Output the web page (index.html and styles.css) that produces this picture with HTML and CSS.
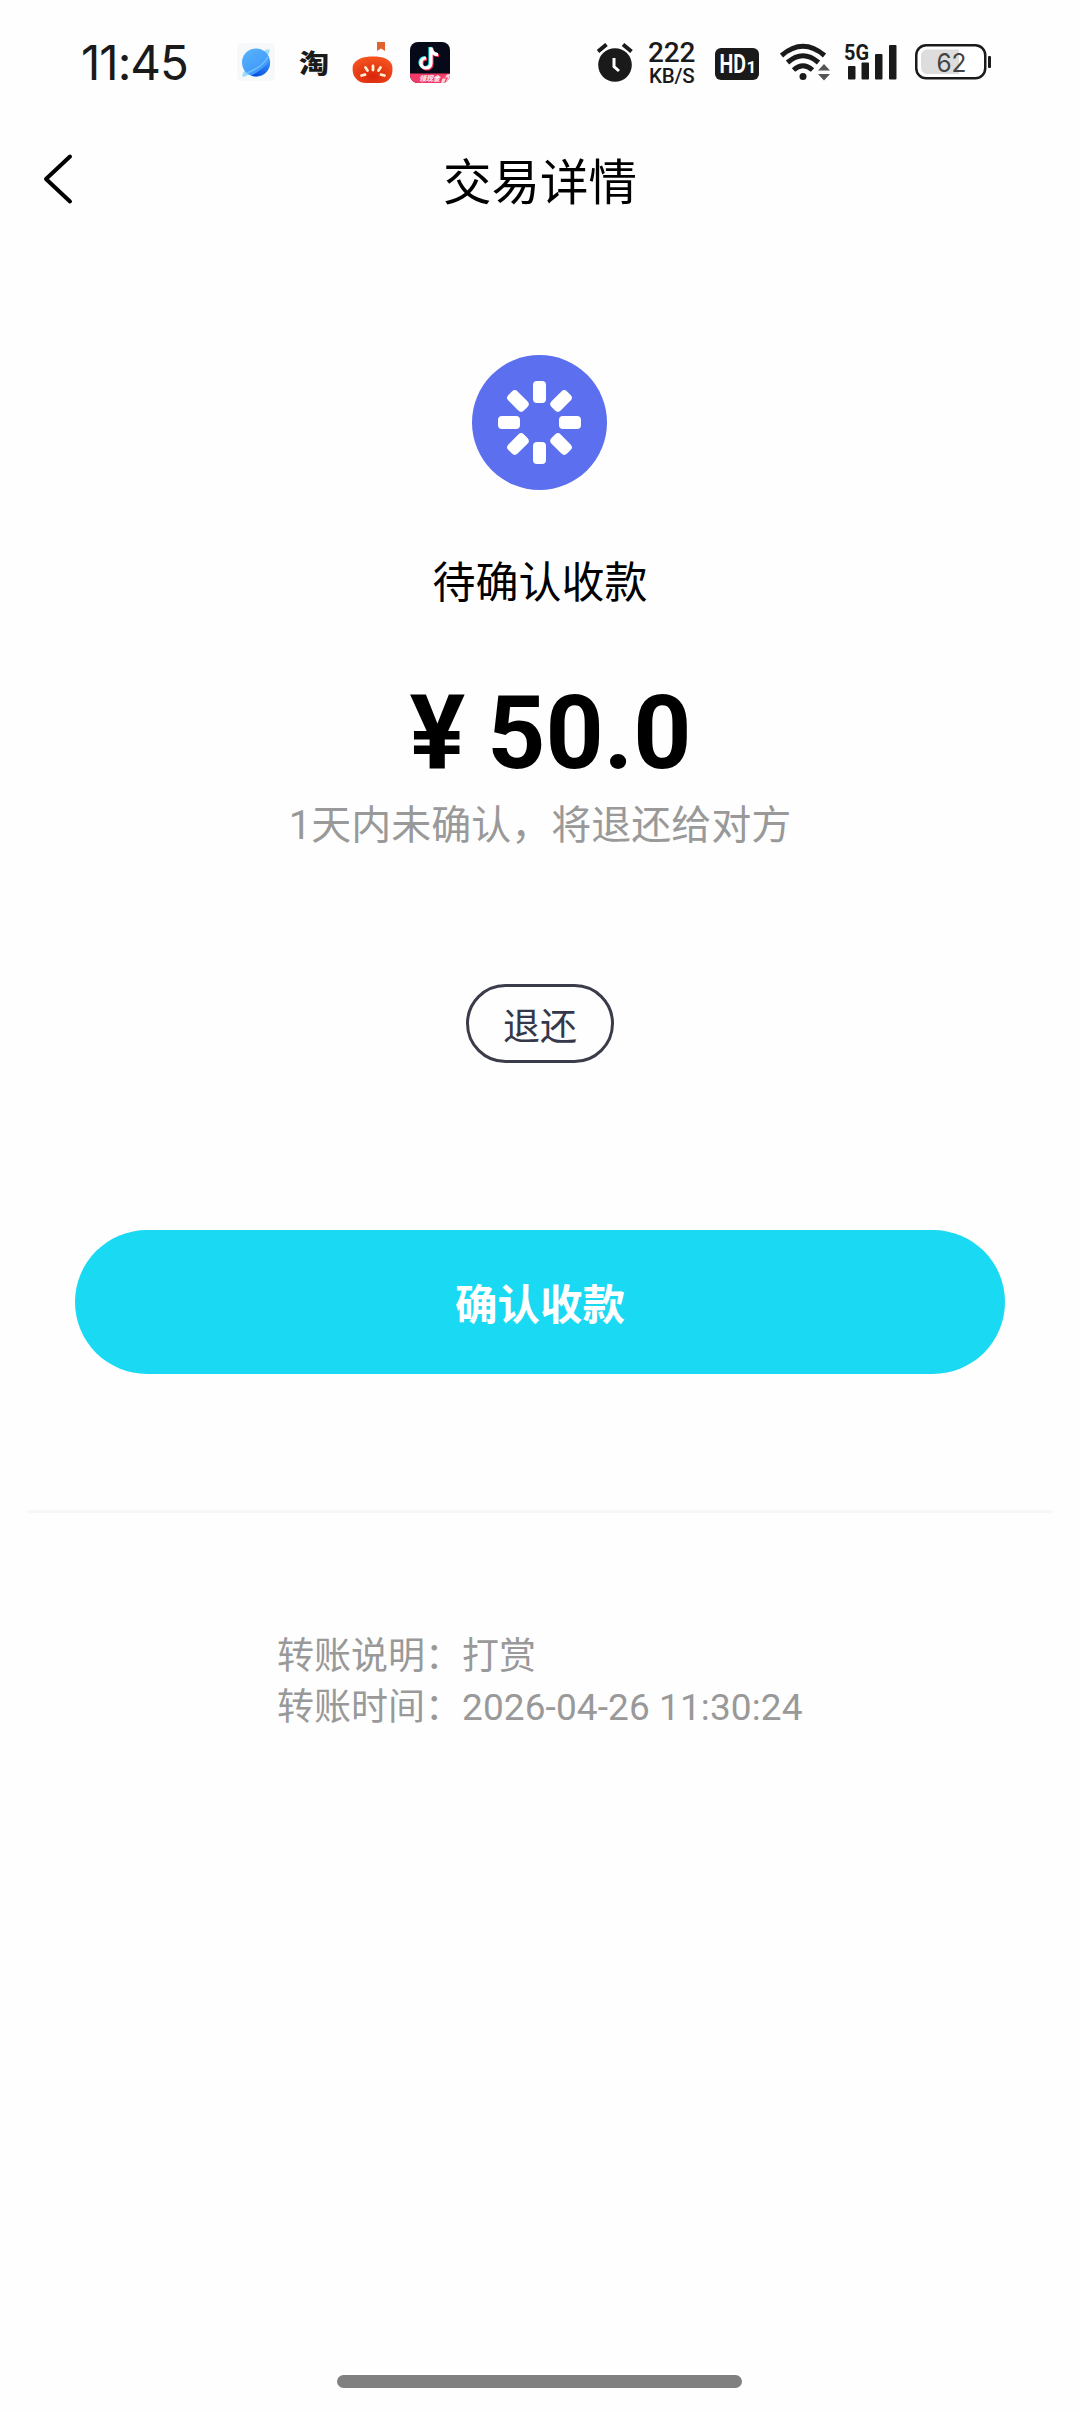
FILE: index.html
```html
<!DOCTYPE html>
<html lang="zh-CN">
<head>
<meta charset="utf-8">
<title>交易详情</title>
<link rel="stylesheet" href="styles.css">
</head>
<body>
<div class="screen">
  <div class="status">
    <span class="clock">11:45</span>
    <svg class="planet" width="40" height="40" viewBox="0 0 40 40">
      <defs>
        <linearGradient id="pg" x1="0" y1="0" x2=".6" y2="1"><stop offset="0" stop-color="#5ab4fb"/><stop offset="1" stop-color="#3a96fb"/></linearGradient>
        <linearGradient id="pd" x1="1" y1="0" x2=".3" y2="1"><stop offset="0" stop-color="#3c93fa"/><stop offset="1" stop-color="#0650dc"/></linearGradient>
      </defs>
      <rect x="1" y="1" width="38" height="38" rx="5" fill="#f7f8f9"/>
      <ellipse cx="20" cy="21" rx="19" ry="4" fill="#9bdcfb" transform="rotate(-45 20 21)"/>
      <circle cx="20" cy="20.500" r="14" fill="url(#pg)"/>
      <path d="M34 18.500A14 14 0 0 1 15 33.500C23 30 30 24 34 18.500z" fill="url(#pd)"/>
      <path d="M11 31C19 28 28 22 32 15" fill="none" stroke="#72bffc" stroke-width="1.500"/>
    </svg>
    <span class="tao">淘</span>
    <svg class="tomato" width="42" height="42" viewBox="0 0 42 42">
      <defs><radialGradient id="tm" cx=".5" cy=".75" r=".7"><stop offset="0" stop-color="#d9240c"/><stop offset="1" stop-color="#f4521e"/></radialGradient></defs>
      <path d="M25 0h8v9l-4-2.500-4 2.500z" fill="#e2622f"/>
      <path d="M1 23C4 17 11 14.500 21 14.500S38 17 40 23C42 32 38 41 28 41H14C4 41-1 32 1 23z" fill="url(#tm)"/>
      <g stroke="#fff1cf" stroke-width="2.800" stroke-linecap="round"><path d="M21 24v4M13.500 25.500l2 3M28.500 25.500l-2 3M9.500 33.500l3.500-.8M32.500 33.500l-3.500-.8"/></g>
    </svg>
    <svg class="tiktok" width="40" height="42" viewBox="0 0 40 42">
      <defs><clipPath id="tc"><rect width="40" height="41" rx="8"/></clipPath></defs>
      <g clip-path="url(#tc)">
        <rect width="40" height="41" fill="#060a18"/>
        <g fill="none" stroke-width="3.200">
          <path d="M20 5v15.500a5 5 0 1 1-5-5M20 5c.5 4.500 3 7 7 7" stroke="#2af0ea"/>
          <path d="M22 6.500v15.500a5 5 0 1 1-5-5M22 6.500c.5 4.500 3 7 7 7" stroke="#fb2c58"/>
          <path d="M21 5.500v15.500a5 5 0 1 1-5-5M21 5.500c.5 4.500 3 7 7 7" stroke="#fff"/>
        </g>
        <path d="M0 31.500H40V41H0z" fill="#f23b68"/>
        <path d="M31 41c1-5 4-9 9-9v9z" fill="#fbd3da"/>
        <text x="9" y="39" class="promo">领现金</text>
        <path d="M36 33l-2 3h3l-2 4" stroke="#f23b68" stroke-width="1.200" fill="none"/>
      </g>
    </svg>
    <svg class="alarm" width="36" height="40" viewBox="0 0 36 40">
      <circle cx="18" cy="22" r="16.800" fill="#1a1a1a"/>
      <path d="M1 8.500L9.500 1.500M26 1.500L34.500 8.500" stroke="#1a1a1a" stroke-width="4"/>
      <path d="M17 15v8.500l5 4.500" fill="none" stroke="#fff" stroke-width="3"/>
    </svg>
    <div class="speed"><span class="rate">222</span><span class="unit">KB/S</span></div>
    <svg class="hd" width="44" height="32" viewBox="0 0 44 32">
      <rect width="44" height="32" rx="6" fill="#1a1a1a"/>
      <text x="4.500" y="25" class="hd-text" textLength="26.500" lengthAdjust="spacingAndGlyphs">HD</text>
      <text x="31.500" y="25" class="hd-num">1</text>
    </svg>
    <svg class="wifi" width="50" height="40" viewBox="0 0 50 40">
      <g fill="none" stroke="#1a1a1a" stroke-width="5">
        <path d="M1.500 13.500Q23 -5 44.500 13.500"/><path d="M7.500 20.500Q23 7 38.500 20.500"/><path d="M13.500 28Q23 19.500 32.500 28"/>
      </g>
      <circle cx="23" cy="34.500" r="3.500" fill="#1a1a1a"/>
      <path d="M38 28.500l6-6.500 6 6.500zM38 32l6 6.500 6-6.500z" fill="#555"/>
    </svg>
    <svg class="signal" width="54" height="48" viewBox="0 -10 54 48">
      <text x="0" y="16.500" class="net" textLength="25" lengthAdjust="spacingAndGlyphs">5G</text>
      <g fill="#1a1a1a"><rect x="4" y="23" width="7.500" height="13.500" rx="1"/><rect x="17.500" y="19.500" width="7.500" height="17" rx="1"/><rect x="31" y="11" width="7.500" height="25.500" rx="1"/><rect x="45" y="2" width="7.500" height="34.500" rx="1"/></g>
    </svg>
    <svg class="battery" width="78" height="38" viewBox="0 0 78 38">
      <rect x="1.250" y="2.250" width="69" height="33" rx="10" fill="#fff" stroke="#1a1a1a" stroke-width="2.500"/>
      <path d="M12 6.500H44V31H12a6 6 0 0 1-6-6V12.500a6 6 0 0 1 6-6z" fill="#ddd"/>
      <rect x="73" y="13" width="3" height="12" rx="1" fill="#1a1a1a"/>
      <text x="21.500" y="28.500" class="level" textLength="30" lengthAdjust="spacingAndGlyphs">62</text>
    </svg>
  </div>

  <header class="nav">
    <svg class="back" width="32" height="52" viewBox="0 0 32 52"><path d="M28 3.500L4 26 28 48.500" fill="none" stroke="#000" stroke-width="4" stroke-linecap="round" stroke-linejoin="round"/></svg>
    <h1 class="title">交易详情</h1>
  </header>

  <main class="content">
    <svg class="state-icon" width="136" height="136" viewBox="-67.500 -67.500 136 136">
      <defs><rect id="spoke" x="-6.500" y="-41.500" width="13" height="22" rx="4"/></defs>
      <circle r="67.500" fill="#5c6fee"/>
      <g fill="#fff"><use href="#spoke"/><use href="#spoke" transform="rotate(45)"/><use href="#spoke" transform="rotate(90)"/><use href="#spoke" transform="rotate(135)"/><use href="#spoke" transform="rotate(180)"/><use href="#spoke" transform="rotate(225)"/><use href="#spoke" transform="rotate(270)"/><use href="#spoke" transform="rotate(315)"/></g>
    </svg>
    <p class="state">待确认收款</p>
    <p class="amount"><span class="yen">¥</span>50.0</p>
    <p class="hint">1天内未确认，将退还给对方</p>
    <button class="refund">退还</button>
    <button class="confirm">确认收款</button>
    <hr class="line">
    <div class="details">
      <p>转账说明：打赏</p>
      <p>转账时间：<span class="time">2026-04-26 11:30:24</span></p>
    </div>
  </main>
  <div class="home"></div>
</div>
</body>
</html>
```

FILE: styles.css
```css
* { box-sizing: border-box; }
body { margin: 0; background: #fefefe; }
p, h1 { margin: 0; font-weight: 400; }
svg { display: block; flex: none; }

.screen {
  width: 1080px;
  height: 2412px;
  display: flex;
  flex-direction: column;
  align-items: center;
  overflow: hidden;
  font-family: Roboto, "Noto Sans CJK SC", sans-serif;
  color: #000;
}

.status {
  width: 1080px;
  height: 124px;
  flex: none;
  display: flex;
  align-items: flex-start;
  padding: 42px 0 0 81px;
  color: #1a1a1a;
}
.clock { width: 155px; font: 400 47.500px/41px Inter, sans-serif; letter-spacing: -1px; }
.tao { width: 30px; margin: 0 22px 0 23px; font: 800 30px/41px "Noto Sans CJK SC", sans-serif; transform: scaleY(.87); }
.tomato { margin-left: 1px; }
.tiktok { margin-left: 16px; }
.promo { font: italic 700 7px "Noto Sans CJK SC", sans-serif; fill: #fff; }
.alarm { margin: 1px 15px 0 147px; }
.speed { width: 48px; display: flex; flex-direction: column; }
.rate { font: 500 28px/22px Roboto, sans-serif; letter-spacing: -.2px; }
.unit { padding-left: 1px; margin-top: 2px; font: 500 20.500px/20px Roboto, sans-serif; letter-spacing: -.2px; }
.hd { margin: 6px 21px 0 19px; }
.hd-text { font: 700 25px Roboto, sans-serif; fill: #fff; }
.hd-num { font: 700 17px Roboto, sans-serif; fill: #fff; }
.signal { margin: -9px 0 0 14px; }
.net { font: 700 22px Roboto, sans-serif; fill: #1a1a1a; }
.battery { margin: 1px 0 0 17px; }
.level { font: 400 26px Inter, sans-serif; fill: #444; }

.nav {
  width: 1080px;
  height: 114px;
  flex: none;
  display: grid;
  grid-template-columns: 100px 1fr 100px;
  align-items: center;
}
.back { margin-left: 42px; margin-top: -5px; }
.title { padding-top: 5px; text-align: center; font-size: 48.500px; line-height: 60px; }

.content { flex: 1; width: 100%; display: flex; flex-direction: column; align-items: center; padding-top: 117px; }
.state { margin-top: 60px; font-size: 43px; line-height: 64px; }
.amount { height: 100px; margin-top: 69px; padding-left: 21px; font-size: 101.500px; line-height: 100px; font-weight: 700; }
.yen { margin-right: 22px; font-size: 104px; line-height: .8; }
.hint { margin-top: 12px; font-size: 40px; line-height: 60px; color: #999; }
.refund {
  width: 148px;
  height: 79px;
  margin-top: 128px;
  padding: 0;
  border: 3px solid #3a3d49;
  border-radius: 40px;
  background: transparent;
  color: #34384a;
  font: 400 37px/60px "Noto Sans CJK SC", sans-serif;
}
.confirm {
  width: 930px;
  height: 144px;
  margin-top: 167px;
  padding: 0;
  border: 0;
  border-radius: 72px;
  background: #1ad9f3;
  color: #fff;
  font: 700 42.500px/60px "Noto Sans CJK SC", sans-serif;
}
.line { width: 1024px; height: 3px; margin: 136px 0 0; border: 0; background: #f7f7f7; }
.details { width: 526px; margin-top: 118px; font-size: 37px; line-height: 51px; color: #999; white-space: nowrap; }
.time { letter-spacing: .1px; }
.home { width: 405px; height: 13px; flex: none; margin: 0 1px 24px 0; border-radius: 7px; background: #808080; }
```
